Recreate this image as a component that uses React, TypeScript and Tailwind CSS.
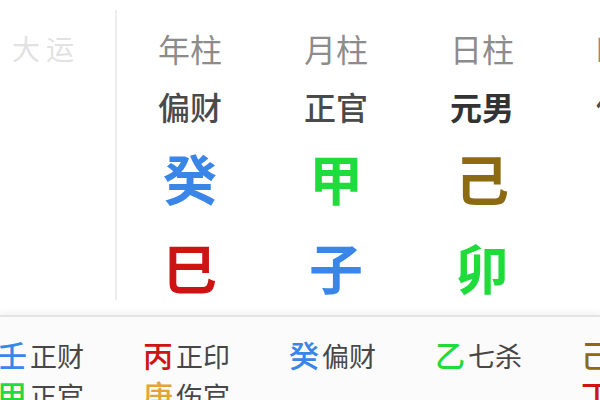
import React from 'react';

interface Pillar {
  title: string;
  god: string;
  godBold?: boolean;
  stem: string;
  stemColor: string;
  branch: string;
  branchColor: string;
}

interface HiddenStem {
  stem: string;
  color: string;
  label: string;
}

const pillars: Pillar[] = [
  { title: '年柱', god: '偏财', stem: '癸', stemColor: 'text-[#3a86e8]', branch: '巳', branchColor: 'text-[#cc1414]' },
  { title: '月柱', god: '正官', stem: '甲', stemColor: 'text-[#1fdc3c]', branch: '子', branchColor: 'text-[#3a86e8]' },
  { title: '日柱', god: '元男', godBold: true, stem: '己', stemColor: 'text-[#8c6a12]', branch: '卯', branchColor: 'text-[#1fdc3c]' },
  { title: '时柱', god: '伤官', stem: '丁', stemColor: 'text-[#cc1414]', branch: '未', branchColor: 'text-[#8c6a12]' },
];

const hiddenTop: HiddenStem[] = [
  { stem: '壬', color: 'text-[#3a86e8]', label: '正财' },
  { stem: '丙', color: 'text-[#cc1414]', label: '正印' },
  { stem: '癸', color: 'text-[#3a86e8]', label: '偏财' },
  { stem: '乙', color: 'text-[#1fdc3c]', label: '七杀' },
  { stem: '己', color: 'text-[#8c6a12]', label: '比肩' },
];

const hiddenBottom: (HiddenStem | null)[] = [
  { stem: '甲', color: 'text-[#1fdc3c]', label: '正官' },
  { stem: '庚', color: 'text-[#e3a436]', label: '伤官' },
  null,
  null,
  { stem: '丁', color: 'text-[#cc1414]', label: '偏印' },
];

const HiddenRow: React.FC<{ items: (HiddenStem | null)[] }> = ({ items }) => (
  <div className="flex ml-[-3px] h-[40px] leading-[40px]">
    {items.map((it, i) => (
      <div key={i} className="w-[146px] shrink-0 flex items-baseline">
        {it && (
          <>
            <span className={`text-[30px] font-medium ${it.color}`}>{it.stem}</span>
            <span className="text-[27px] text-[#474747] ml-[3px]">{it.label}</span>
          </>
        )}
      </div>
    ))}
  </div>
);

export default function App() {
  return (
    <div
      className="w-[600px] h-[400px] overflow-hidden bg-white"
      style={{ fontFamily: '"Noto Sans CJK SC", "Noto Sans", sans-serif' }}
    >
      <div className="h-[315px] flex ml-[-29px]">
        <div className="w-[146px] shrink-0 mt-[10px] h-[290px] border-r-2 border-[#ececec] flex flex-col items-center">
          <div className="mt-[18px] h-[40px] leading-[40px] text-[28px] text-[#e2e2e2] tracking-[6px] pl-[6px]">大运</div>
        </div>
        {pillars.map((p) => (
          <div key={p.title} className="w-[146px] shrink-0 flex flex-col items-center pt-[28px]">
            <div className="h-[40px] leading-[40px] text-[32px] text-[#8c8c8c] whitespace-nowrap">{p.title}</div>
            <div
              className={`mt-[18px] h-[40px] leading-[40px] text-[32px] whitespace-nowrap ${p.godBold ? 'font-bold text-[#333]' : 'font-medium text-[#4a4a4a]'}`}
            >
              {p.god}
            </div>
            <div className={`mt-[22px] h-[60px] leading-[60px] text-[54px] font-bold ${p.stemColor}`}>{p.stem}</div>
            <div className={`mt-[29px] h-[60px] leading-[60px] text-[54px] font-bold ${p.branchColor}`}>{p.branch}</div>
          </div>
        ))}
      </div>
      <div className="h-[85px] bg-[#fbfbfb] border-t-2 border-[#e4e4e4] shadow-[0_-3px_6px_rgba(0,0,0,0.05)] pt-[17px]">
        <HiddenRow items={hiddenTop} />
        <HiddenRow items={hiddenBottom} />
      </div>
    </div>
  );
}
